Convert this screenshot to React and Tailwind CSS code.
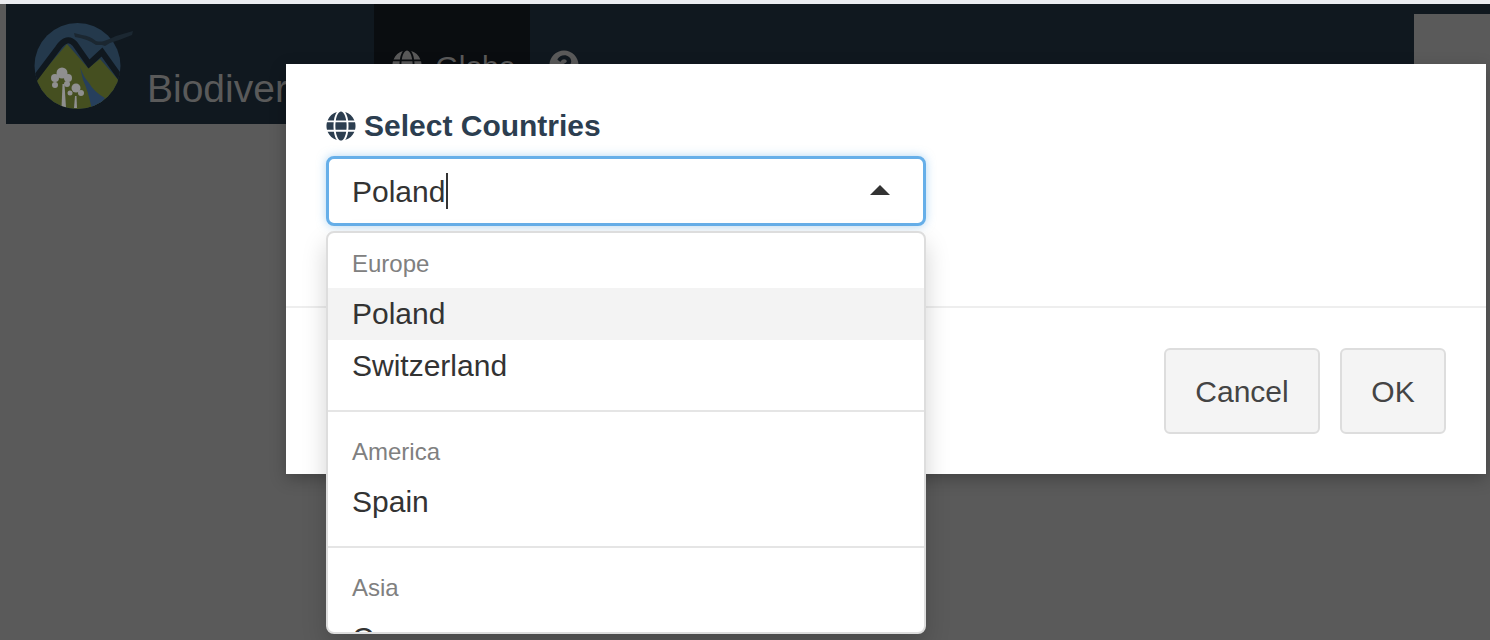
import React from 'react';
import { FaGlobe, FaQuestionCircle } from 'react-icons/fa';

const Logo = () => (
  <svg width="100" height="87" viewBox="0 -7 100 87" className="shrink-0">
    <defs>
      <clipPath id="logoCircle">
        <circle cx="43.5" cy="36" r="43" />
      </clipPath>
    </defs>
    <g clipPath="url(#logoCircle)">
      <rect x="0" y="-8" width="90" height="90" fill="#24394c" />
      <path d="M2 50 L33 14 L54 38 L66 29 L86 52 L90 82 L0 82 Z" fill="#454f20" />
      <path d="M0 50 L24 18 Q33 5 41 14 L55 34 L68 22 L88 50" fill="none" stroke="#10181f" strokeWidth="6" />
      <path d="M46 37 Q50 48 55 53 Q60 62 71 68 L62 80 L58 80 Q54 60 49 50 Z" fill="#263f5c" />
      <path d="M27.5 78 L28.5 54 L30.5 54 L32 78 Z" fill="#8f8f8f" />
      <path d="M40 78 L41 66 L42.5 66 L43 78 Z" fill="#8f8f8f" />
      <circle cx="28" cy="43" r="5.5" fill="#8f8f8f" />
      <circle cx="21" cy="48" r="4" fill="#8f8f8f" />
      <circle cx="34" cy="48" r="4" fill="#8f8f8f" />
      <circle cx="21" cy="55" r="3" fill="#8f8f8f" />
      <circle cx="33" cy="54" r="3" fill="#8f8f8f" />
      <circle cx="42" cy="58" r="4.5" fill="#8f8f8f" />
      <circle cx="36" cy="63" r="2.5" fill="#8f8f8f" />
      <circle cx="47" cy="63" r="3" fill="#8f8f8f" />
    </g>
    <path d="M40 3 L48 5 Q56 6 62 11 Q66 12 70 11 Q76 9 82 6 L99 1 L98 5 Q86 10 76 13 L71 16 L68 15 L62 15 Q54 9 41 7 Z" fill="#1b2731" />
  </svg>
);

const Option = ({ label, active }) => (
  <div className={`h-[52px] pb-[2px] flex items-center pl-[24px] text-[30px] text-[#333] ${active ? 'bg-[#f3f3f3]' : ''}`}>
    {label}
  </div>
);

const Group = ({ label, first, children }) => (
  <div className={first ? 'pt-[16px] pb-[18px]' : 'pt-[25px] pb-[18px] border-t-2 border-[#e5e5e5]'}>
    <div className="h-[30px] mb-[9px] flex items-center pl-[24px] text-[24px] text-[#808080]">{label}</div>
    {children}
  </div>
);

const App = () => {
  return (
    <div className="relative h-[640px] w-[1490px] overflow-hidden bg-[#5a5a5a] font-['Liberation_Sans',Arial,sans-serif]">
      <div className="h-[4px] bg-[#ebecf0]" />

      <nav className="ml-[6px] h-[120px] flex bg-[#10181f] text-[#5a5a5a]">
        <div className="ml-[28px] mt-[19px]">
          <Logo />
        </div>
        <div className="ml-[13px] mt-[63px] text-[39px] leading-[44px] whitespace-nowrap">Biodiversity</div>
        <div className="ml-[28px] w-[156px] h-full pl-[18px] pt-[46px] flex items-start gap-[13px] bg-[#0a0d10]">
          <FaGlobe className="w-[30px] h-[30px] shrink-0" />
          <span className="text-[30px] leading-[34px]">Globe</span>
        </div>
        <div className="ml-[19px] pt-[46px]">
          <FaQuestionCircle className="w-[30px] h-[30px]" />
        </div>
        <div className="ml-auto mt-[10px] w-[76px] bg-[#5a5a5a]" />
      </nav>

      {/* modal */}
      <div className="absolute left-[286px] top-[64px] w-[1200px] h-[410px] bg-white shadow-[0_5px_15px_rgba(0,0,0,0.25)]">
        <div className="h-[244px] border-b-2 border-[#eeeeee] pl-[40px] pt-[45px]">
          <div className="flex items-center gap-[8px] h-[34px] text-[#2c3e50]">
            <FaGlobe className="w-[30px] h-[30px]" />
            <h3 className="text-[30px] leading-[34px] font-bold">Select Countries</h3>
          </div>

          <div className="relative mt-[13px] w-[600px]">
            <div className="h-[70px] flex items-center justify-between pl-[23px] pr-[33px] bg-white border-[3px] border-[#66afe9] rounded-[8px] shadow-[0_0_10px_rgba(102,175,233,0.5)]">
              <div className="flex items-center text-[30px] text-[#333]">
                Poland
                <span className="ml-[1px] w-[2px] h-[36px] bg-[#333]" />
              </div>
              <div className="mb-[3px] w-0 h-0 border-x-[10px] border-x-transparent border-b-[10px] border-b-[#333]" />
            </div>

            <div className="absolute left-0 top-[75px] w-[600px] h-[403px] overflow-hidden bg-white border-2 border-[#dddddd] rounded-[8px] shadow-[0_12px_24px_rgba(0,0,0,0.175)]">
              <Group label="Europe" first>
                <Option label="Poland" active />
                <Option label="Switzerland" />
              </Group>
              <Group label="America">
                <Option label="Spain" />
              </Group>
              <Group label="Asia">
                <Option label="Cyprus" />
              </Group>
            </div>
          </div>
        </div>

        <div className="flex justify-end gap-[20px] pt-[40px] pr-[40px]">
          <button className="w-[156px] h-[86px] bg-[#f4f4f4] border-2 border-[#dddddd] rounded-[6px] text-[30px] text-[#444]">
            Cancel
          </button>
          <button className="w-[106px] h-[86px] bg-[#f4f4f4] border-2 border-[#dddddd] rounded-[6px] text-[30px] text-[#444]">
            OK
          </button>
        </div>
      </div>
    </div>
  );
};

export default App;
